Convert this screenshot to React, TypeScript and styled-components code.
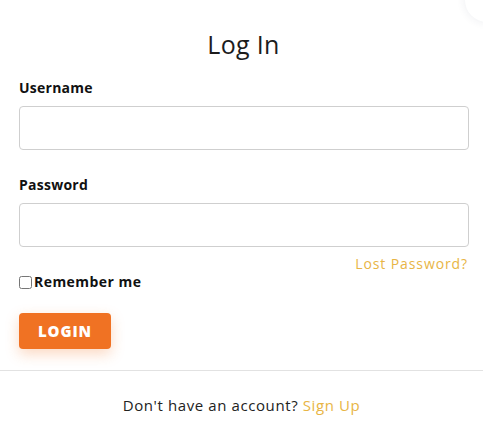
import styled, { createGlobalStyle } from "styled-components";

const GlobalStyle = createGlobalStyle`
    html, body {
        margin: 0;
        padding: 0;
        background: #ffffff;
    }
    body {
        font-family: "Open Sans", "Noto Sans", sans-serif;
        color: #111;
    }
`;

// 모달 전체
const Modal = styled.div`
    position: relative;
    width: 483px;
    height: 445px;
    overflow: hidden;
    background: #fff;
    display: flex;
    flex-direction: column;
`;
// 오른쪽 위 닫기 버튼 그림자
const CloseGhost = styled.div`
    position: absolute;
    top: -22px;
    right: -26px;
    width: 44px;
    height: 44px;
    border-radius: 50%;
    background: #fff;
    box-shadow: 0 0 10px rgba(40, 50, 90, 0.09);
`;
const Body = styled.form`
    padding: 29px 15px 0 19px;
    display: flex;
    flex-direction: column;
`;
const Title = styled.h2`
    margin: 0;
    text-align: center;
    font-size: 25px;
    line-height: 30px;
    font-weight: 400;
    letter-spacing: 0.3px;
    color: #1c1c1c;
`;
const Label = styled.label<{ $gap: number }>`
    display: block;
    margin-top: ${(props) => props.$gap}px;
    font-size: 14px;
    line-height: 20px;
    font-weight: 700;
    letter-spacing: 0.25px;
    color: #111;
`;
const Input = styled.input`
    box-sizing: border-box;
    margin-top: 8px;
    width: 450px;
    height: 44px;
    border: 1px solid #cfcfcf;
    border-radius: 4px;
    padding: 0 12px;
    font-size: 14px;
    outline: none;
`;
const LostLink = styled.a`
    align-self: flex-end;
    margin-top: 8px;
    font-size: 14px;
    line-height: 18px;
    letter-spacing: 0.9px;
    color: #e8b545;
    text-decoration: none;
`;
const RememberRow = styled.label`
    display: flex;
    align-items: center;
    gap: 2px;
    font-size: 14px;
    line-height: 18px;
    font-weight: 700;
    letter-spacing: 0.45px;
    color: #111;
`;
const Check = styled.input`
    margin: 0;
    width: 13px;
    height: 13px;
`;
const LoginButton = styled.button`
    align-self: flex-start;
    margin-top: 22px;
    width: 92px;
    height: 36px;
    border: none;
    border-radius: 4px;
    background: #f07223;
    color: #fff;
    font-family: "Open Sans", sans-serif;
    font-size: 15px;
    font-weight: 800;
    letter-spacing: 0.9px;
    box-shadow: 0 5px 14px rgba(240, 114, 35, 0.28);
`;
const Footer = styled.div`
    margin-top: 21px;
    height: 70px;
    border-top: 1px solid #e2e2e2;
    padding-top: 23px;
    box-sizing: content-box;
    text-align: center;
    font-size: 15px;
    line-height: 22px;
    letter-spacing: 0.6px;
    color: #222;
`;
const SignUp = styled.a`
    color: #e8b545;
    text-decoration: none;
`;
const Backdrop = styled.div`
    flex: 1;
    background: linear-gradient(90deg, #3a3a3a, #555 30%, #2a2a2a 60%, #4a4a4a);
`;

function App() {
    return (
        <>
            <GlobalStyle />
            <Modal>
                <CloseGhost />
                <Body onSubmit={(e) => e.preventDefault()}>
                    <Title>Log In</Title>
                    <Label $gap={19}>Username</Label>
                    <Input type="text" />
                    <Label $gap={25}>Password</Label>
                    <Input type="password" />
                    <LostLink href="#">Lost Password?</LostLink>
                    <RememberRow>
                        <Check type="checkbox" />
                        Remember me
                    </RememberRow>
                    <LoginButton type="submit">LOGIN</LoginButton>
                </Body>
                <Footer>
                    Don't have an account? <SignUp href="#">Sign Up</SignUp>
                </Footer>
                <Backdrop />
            </Modal>
        </>
    );
}

export default App;
